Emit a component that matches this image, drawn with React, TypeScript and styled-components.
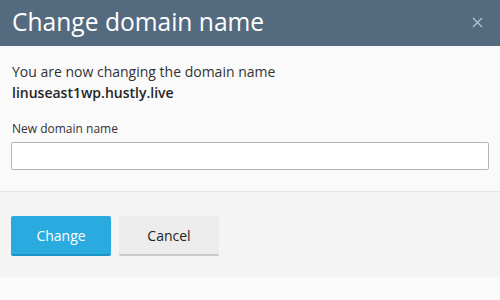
import React from "react";
import styled, { createGlobalStyle } from "styled-components";

const Global = createGlobalStyle`
  html, body { margin: 0; padding: 0; background: #fafafa; }
  body { font-family: "Open Sans", "Liberation Sans", sans-serif; color: #333; }
  * { box-sizing: border-box; }
`;

const Dialog = styled.div`
  width: 500px;
  display: flex;
  flex-direction: column;
  background: #fafafa;
`;

const Header = styled.div`
  height: 46px;
  background: #546a7f;
  display: flex;
  align-items: center;
  justify-content: space-between;
  padding: 0 16px 0 12px;
`;

const Title = styled.h1`
  margin: 0;
  font-size: 24.6px;
  font-weight: 400;
  color: #ffffff;
  line-height: 1;
  padding-bottom: 2px;
`;

const Close = styled.button`
  width: 14px;
  height: 14px;
  padding: 0;
  border: none;
  background: transparent;
  display: flex;
  align-items: center;
  justify-content: center;
  cursor: pointer;
  margin-bottom: 2px;
`;

const Body = styled.div`
  padding: 15px 11px 21px 12px;
`;

const Text = styled.p`
  margin: 0;
  font-size: 14px;
  line-height: 21px;
  color: #333;
`;

const Domain = styled(Text)`
  font-weight: 600;
  color: #262626;
`;

const Label = styled.label`
  display: block;
  margin-top: 17px;
  margin-bottom: 4px;
  font-size: 12px;
  line-height: 18px;
  color: #333;
`;

const Input = styled.input`
  display: block;
  width: 478px;
  margin-left: -1px;
  height: 28px;
  border: 1px solid #b3b3b3;
  border-radius: 2px;
  background: #fff;
  font-family: inherit;
  font-size: 13px;
  padding: 0 6px;
  outline: none;
`;

const Footer = styled.div`
  border-top: 1px solid #e6e6e6;
  background: #f4f4f4;
  padding: 24px 11px 21px;
  display: flex;
  gap: 8px;
`;

const Button = styled.button<{ $primary?: boolean }>`
  width: 100px;
  height: 40px;
  border: none;
  border-radius: 2px;
  font-family: inherit;
  font-size: 14px;
  cursor: pointer;
  background: ${(p) => (p.$primary ? "#29abe0" : "#ececec")};
  color: ${(p) => (p.$primary ? "#ffffff" : "#222")};
  border-bottom: 2px solid ${(p) => (p.$primary ? "#1b92c4" : "#c8c8c8")};
  padding: 0;
`;

export default function App() {
  return (
    <>
      <Global />
      <Dialog>
        <Header>
          <Title>Change domain name</Title>
          <Close aria-label="Close">
            <svg width="11" height="11" viewBox="0 0 11 11">
              <path d="M1 1L10 10M10 1L1 10" stroke="#b9c5d1" strokeWidth="1.2" fill="none" />
            </svg>
          </Close>
        </Header>
        <Body>
          <Text>You are now changing the domain name</Text>
          <Domain>linuseast1wp.hustly.live</Domain>
          <Label htmlFor="nd">New domain name</Label>
          <Input id="nd" type="text" />
        </Body>
        <Footer>
          <Button $primary>Change</Button>
          <Button>Cancel</Button>
        </Footer>
      </Dialog>
    </>
  );
}
